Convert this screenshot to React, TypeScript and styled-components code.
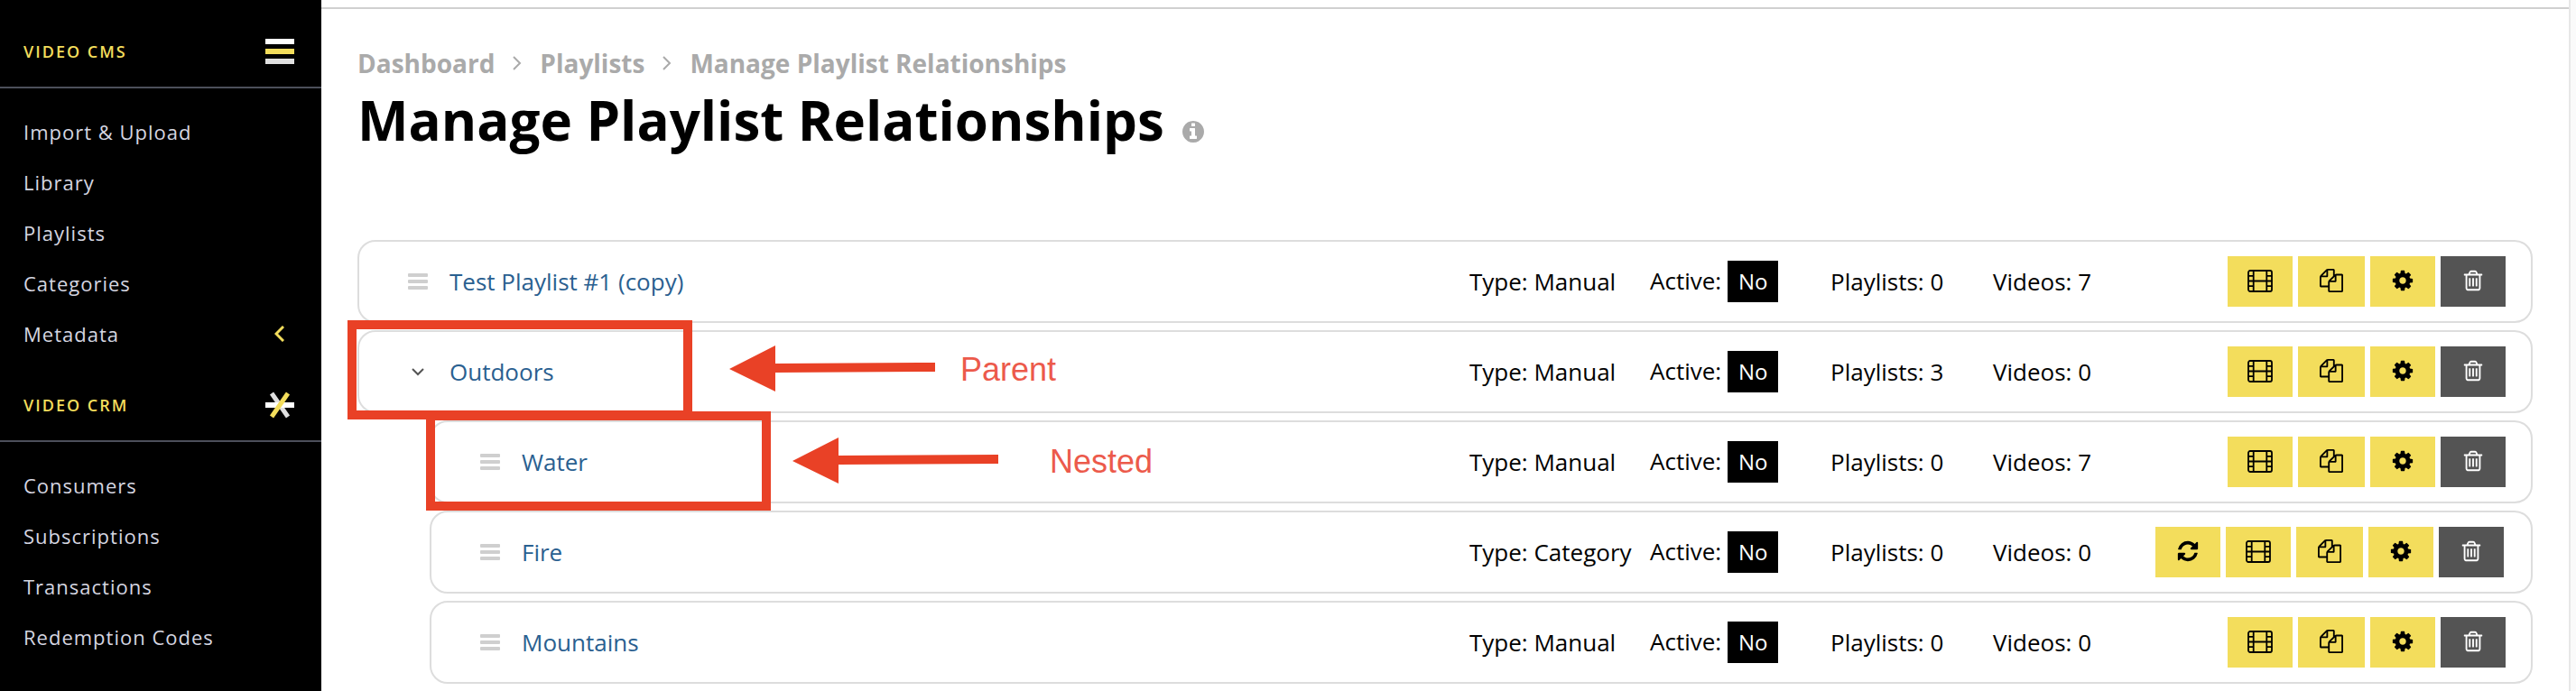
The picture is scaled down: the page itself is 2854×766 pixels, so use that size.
import React from "react";
import styled, { createGlobalStyle } from "styled-components";

const GlobalStyle = createGlobalStyle`
  *, *::before, *::after { box-sizing: border-box; }
  body {
    margin: 0;
    background: #fff;
    color: #000;
    font-family: "Open Sans", "Noto Sans", sans-serif;
    font-size: 26px;
    line-height: 36px;
  }
  a { text-decoration: none; color: inherit; }
`;

const YELLOW = "#f3dd5c";
const MARK = "#e94126";

const Shell = styled.div`
  display: flex;
  min-height: 100vh;
  overflow: hidden;
`;

const Sidebar = styled.aside`
  flex: 0 0 356px;
  padding-top: 18px;
  background: #000;
`;

const SectionHead = styled.div`
  display: flex;
  align-items: center;
  justify-content: space-between;
  height: 80px;
  padding: 0 30px 0 26px;
  border-bottom: 2px solid #4c4f5a;
`;

const SectionTitle = styled.h2`
  margin: 0;
  color: ${YELLOW};
  font-size: 18px;
  font-weight: 600;
  line-height: 24px;
  letter-spacing: 2px;
`;

const Menu = styled.ul`
  margin: 0;
  padding: 20px 0 12px;
  list-style: none;
`;

const MenuLink = styled.a`
  display: flex;
  align-items: center;
  justify-content: space-between;
  height: 56px;
  padding: 0 41px 0 26px;
  color: #d5d6e0;
  font-size: 22px;
  letter-spacing: 1px;
`;

const Main = styled.main`
  flex: 1;
  min-width: 0;
  margin-top: 8px;
  padding: 40px 40px 0;
  border-top: 2px solid #d0d0d0;
`;

const Gutter = styled.div`
  flex: 0 0 8px;
  border-left: 2px solid #e7e7e7;
  background: #fafafa;
`;

const Crumbs = styled.nav`
  display: flex;
  align-items: center;
  gap: 20px;
  color: #aaa;
  font-size: 28px;
  font-weight: 700;
  line-height: 40px;
`;

const TitleBar = styled.div`
  display: flex;
  align-items: center;
  gap: 18px;
`;

const Title = styled.h1`
  margin: 0;
  font-size: 60px;
  font-weight: 700;
  line-height: 86px;
`;

const InfoButton = styled.button`
  display: flex;
  margin-top: 26px;
  padding: 0;
  border: 0;
  background: none;
  color: #aaa;
`;

const List = styled.div`
  position: relative;
  display: flex;
  flex-direction: column;
  gap: 8px;
  margin-top: 90px;
`;

const Row = styled.article<{ $nested?: boolean }>`
  display: flex;
  align-items: center;
  height: 92px;
  margin-left: ${(p) => (p.$nested ? 80 : 0)}px;
  padding: 0 28px 0 52px;
  border: 2px solid #ddd;
  border-radius: 20px;
`;

const Handle = styled.button`
  display: flex;
  justify-content: center;
  width: 26px;
  margin-right: 22px;
  padding: 0;
  border: 0;
  background: none;
`;

const Name = styled.a`
  flex: 1;
  color: #2a6090;
`;

const Fact = styled.span<{ $width: number }>`
  flex: 0 0 ${(p) => p.$width}px;
  white-space: nowrap;
`;

const Badge = styled.span`
  display: inline-block;
  padding: 5px 12px;
  background: #000;
  color: #fff;
  font-size: 24px;
`;

const Actions = styled.div<{ $inset?: boolean }>`
  display: flex;
  flex: 0 0 408px;
  justify-content: flex-end;
  gap: 6px;
  padding-right: ${(p) => (p.$inset ? 2 : 0)}px;
`;

const ActionButton = styled.button<{ $tone?: "dark"; $wide?: boolean }>`
  display: flex;
  align-items: center;
  justify-content: center;
  width: ${(p) => (p.$wide ? 74 : 72)}px;
  height: 56px;
  padding: 0 0 2px;
  border: 0;
  background: ${(p) => (p.$tone === "dark" ? "#545454" : YELLOW)};
  color: ${(p) => (p.$tone === "dark" ? "#fff" : "#000")};
`;

const Callout = styled.div<{ $x: number; $y: number }>`
  position: absolute;
  left: ${(p) => p.$x}px;
  top: ${(p) => p.$y}px;
  width: 382px;
  height: 110px;
  border: 10px solid ${MARK};
  pointer-events: none;
`;

const Arrow = styled.svg<{ $x: number; $y: number }>`
  position: absolute;
  left: ${(p) => p.$x}px;
  top: ${(p) => p.$y}px;
`;

const CalloutText = styled.span<{ $x: number; $y: number }>`
  position: absolute;
  left: ${(p) => p.$x}px;
  top: ${(p) => p.$y}px;
  color: #ec5a4b;
  font-family: "Liberation Sans", Arial, sans-serif;
  font-size: 36px;
  line-height: 40px;
`;

const GLYPHS = {
  info: "M1152 1376v-160q0-14-9-23t-23-9h-96v-512q0-14-9-23t-23-9h-320q-14 0-23 9t-9 23v160q0 14 9 23t23 9h96v320h-96q-14 0-23 9t-9 23v160q0 14 9 23t23 9h448q14 0 23-9t9-23zm-128-896v-160q0-14-9-23t-23-9h-192q-14 0-23 9t-9 23v160q0 14 9 23t23 9h192q14 0 23-9t9-23zm640 416q0 209-103 385.5t-279.5 279.5-385.5 103-385.5-103-279.5-279.5-103-385.5 103-385.5 279.5-279.5 385.5-103 385.5 103 279.5 279.5 103 385.5z",
  cog: "M1152 896q0-106-75-181t-181-75-181 75-75 181 75 181 181 75 181-75 75-181zm512-109v222q0 12-8 23t-20 13l-185 28q-19 54-39 91 35 50 107 138 10 12 10 25t-9 23q-27 37-99 108t-94 71q-12 0-26-9l-138-108q-44 23-91 38-16 136-29 186-7 28-36 28h-222q-14 0-24.5-8.5t-11.5-21.5l-28-184q-49-16-90-37l-141 107q-10 9-25 9-14 0-25-11-126-114-165-168-7-10-7-23 0-12 8-23 15-21 51-66.5t54-70.5q-27-50-41-99l-183-27q-13-2-21-12.5t-8-23.5v-222q0-12 8-23t19-13l186-28q14-46 39-92-40-57-107-138-10-12-10-24 0-10 9-23 26-36 98.5-107.5t94.5-71.5q13 0 26 10l138 107q44-23 91-38 16-136 29-186 7-28 36-28h222q14 0 24.5 8.5t11.5 21.5l28 184q49 16 90 37l142-107q9-9 24-9 13 0 25 10 129 119 165 170 7 8 7 22 0 12-8 23-15 21-51 66.5t-54 70.5q26 50 41 98l183 28q13 2 21 12.5t8 23.5z",
  refresh: "M1639 1056q0 5-1 7-64 268-268 434.5t-478 166.5q-146 0-282.5-55t-243.5-157l-129 129q-19 19-45 19t-45-19-19-45v-448q0-26 19-45t45-19h448q26 0 45 19t19 45-19 45l-137 137q71 66 161 102t187 36q134 0 250-65t186-179q11-17 53-117 8-23 30-23h192q13 0 22.5 9.5t9.5 22.5zm25-800v448q0 26-19 45t-45 19h-448q-26 0-45-19t-19-45 19-45l138-138q-148-137-349-137-134 0-250 65t-186 179q-11 17-53 117-8 23-30 23h-199q-13 0-22.5-9.5t-9.5-22.5v-7q65-268 270-434.5t480-166.5q146 0 284 55.5t245 156.5l130-129q19-19 45-19t45 19 19 45z",
  copy: "M1696 384q40 0 68 28t28 68v1216q0 40-28 68t-68 28h-960q-40 0-68-28t-28-68v-288h-544q-40 0-68-28t-28-68v-672q0-40 20-88t48-76l408-408q28-28 76-48t88-20h416q40 0 68 28t28 68v328q68-40 128-40h416zm-544 213l-299 299h299v-299zm-640-384l-299 299h299v-299zm196 647l316-316v-416h-384v416q0 40-28 68t-68 28h-416v640h512v-256q0-40 20-88t48-76zm956 804v-1152h-384v416q0 40-28 68t-68 28h-416v640h896z",
  trash: "M704 736v576q0 14-9 23t-23 9h-64q-14 0-23-9t-9-23v-576q0-14 9-23t23-9h64q14 0 23 9t9 23zm256 0v576q0 14-9 23t-23 9h-64q-14 0-23-9t-9-23v-576q0-14 9-23t23-9h64q14 0 23 9t9 23zm256 0v576q0 14-9 23t-23 9h-64q-14 0-23-9t-9-23v-576q0-14 9-23t23-9h64q14 0 23 9t9 23zm128 724v-948h-896v948q0 22 7 40.5t14.5 27 10.5 8.5h832q3 0 10.5-8.5t14.5-27 7-40.5zm-672-1076h448l-48-117q-7-9-17-11h-317q-10 2-17 11zm928 32v64q0 14-9 23t-23 9h-96v948q0 83-47 143.5t-113 60.5h-832q-66 0-113-58.5t-47-141.5v-952h-96q-14 0-23-9t-9-23v-64q0-14 9-23t23-9h309l70-167q15-37 54-63t79-26h320q40 0 79 26t54 63l70 167h309q14 0 23 9t9 23z",
};

const Glyph = ({ name, size = 26 }: { name: keyof typeof GLYPHS; size?: number }) => (
  <svg width={size} height={size} viewBox="0 0 1792 1792" fill="currentColor" aria-hidden>
    <path d={GLYPHS[name]} />
  </svg>
);

const FilmIcon = () => (
  <svg width="28" height="25" viewBox="0 0 28 25" fill="none" stroke="currentColor" strokeWidth="1.8" aria-hidden>
    <rect x="1" y="1" width="26" height="23" rx="2" />
    <path d="M6.7 1v23M21.3 1v23M6.7 12.5h14.6M1 6.8h5.7M1 12.5h5.7M1 18.2h5.7M21.3 6.8H27M21.3 12.5H27M21.3 18.2H27" />
  </svg>
);

const GripIcon = () => (
  <svg width="22" height="18" viewBox="0 0 22 18" fill="#cfcfcf" aria-hidden>
    <rect width="22" height="4" rx="1" />
    <rect y="7" width="22" height="4" rx="1" />
    <rect y="14" width="22" height="4" rx="1" />
  </svg>
);

const ChevronDown = () => (
  <svg width="14" height="9" viewBox="0 0 14 9" fill="none" stroke="#555" strokeWidth="2" aria-hidden>
    <path d="M1 1l6 6 6-6" />
  </svg>
);

const ChevronLeft = () => (
  <svg width="11" height="18" viewBox="0 0 11 18" fill="none" stroke={YELLOW} strokeWidth="3" aria-hidden>
    <path d="M10 1L2 9l8 8" />
  </svg>
);

const CrumbArrow = () => (
  <svg width="10" height="16" viewBox="0 0 10 16" fill="none" stroke="#aaa" strokeWidth="2" aria-hidden>
    <path d="M1 1l7 7-7 7" />
  </svg>
);

const CmsLogo = () => (
  <svg width="32" height="28" viewBox="0 0 32 28" aria-hidden>
    <rect width="32" height="6" fill="#fff" />
    <rect y="11" width="32" height="6" fill={YELLOW} />
    <rect y="22" width="32" height="6" fill="#e0e0e0" />
  </svg>
);

const CrmLogo = () => (
  <svg width="32" height="30" viewBox="0 0 32 30" fill="none" strokeWidth="5" aria-hidden>
    <path d="M7 2l18 26" stroke="#e0e0e0" />
    <path d="M0 15h32" stroke="#fff" strokeWidth="6" />
    <path d="M25 2L7 28" stroke={YELLOW} />
  </svg>
);

const PointerArrow = ({ x, y }: { x: number; y: number }) => (
  <Arrow $x={x} $y={y} width="228" height="51" viewBox="0 0 228 51" fill={MARK} aria-hidden>
    <path d="M0 26L51 0v20l177-1v10l-177 1v21z" />
  </Arrow>
);

type Item = {
  name: string;
  type: string;
  playlists: number;
  videos: number;
  nested?: boolean;
  open?: boolean;
  sync?: boolean;
};

const ITEMS: Item[] = [
  { name: "Test Playlist #1 (copy)", type: "Manual", playlists: 0, videos: 7 },
  { name: "Outdoors", type: "Manual", playlists: 3, videos: 0, open: true },
  { name: "Water", type: "Manual", playlists: 0, videos: 7, nested: true },
  { name: "Fire", type: "Category", playlists: 0, videos: 0, nested: true, sync: true },
  { name: "Mountains", type: "Manual", playlists: 0, videos: 0, nested: true },
];

const SECTIONS = [
  {
    title: "VIDEO CMS",
    logo: <CmsLogo />,
    links: ["Import & Upload", "Library", "Playlists", "Categories", "Metadata"],
  },
  {
    title: "VIDEO CRM",
    logo: <CrmLogo />,
    links: ["Consumers", "Subscriptions", "Transactions", "Redemption Codes"],
  },
];

const PlaylistRow = ({ item }: { item: Item }) => (
  <Row $nested={item.nested}>
    <Handle aria-label={item.open ? "Collapse" : "Drag"}>
      {item.open ? <ChevronDown /> : <GripIcon />}
    </Handle>
    <Name href="#">{item.name}</Name>
    <Fact $width={200}>Type: {item.type}</Fact>
    <Fact $width={200}>
      Active: <Badge>No</Badge>
    </Fact>
    <Fact $width={180}>Playlists: {item.playlists}</Fact>
    <Fact $width={160}>Videos: {item.videos}</Fact>
    <Actions $inset={item.sync}>
      {item.sync && (
        <ActionButton aria-label="Sync">
          <Glyph name="refresh" />
        </ActionButton>
      )}
      <ActionButton aria-label="Videos">
        <FilmIcon />
      </ActionButton>
      <ActionButton aria-label="Duplicate" $wide>
        <Glyph name="copy" />
      </ActionButton>
      <ActionButton aria-label="Settings">
        <Glyph name="cog" />
      </ActionButton>
      <ActionButton aria-label="Delete" $tone="dark">
        <Glyph name="trash" />
      </ActionButton>
    </Actions>
  </Row>
);

export default function App() {
  return (
    <Shell>
      <GlobalStyle />
      <Sidebar>
        {SECTIONS.map((section) => (
          <section key={section.title}>
            <SectionHead>
              <SectionTitle>{section.title}</SectionTitle>
              {section.logo}
            </SectionHead>
            <Menu>
              {section.links.map((link) => (
                <li key={link}>
                  <MenuLink href="#">
                    {link}
                    {link === "Metadata" && <ChevronLeft />}
                  </MenuLink>
                </li>
              ))}
            </Menu>
          </section>
        ))}
      </Sidebar>
      <Main>
        <Crumbs aria-label="Breadcrumb">
          <a href="#">Dashboard</a>
          <CrumbArrow />
          <a href="#">Playlists</a>
          <CrumbArrow />
          <a href="#">Manage Playlist Relationships</a>
        </Crumbs>
        <TitleBar>
          <Title>Manage Playlist Relationships</Title>
          <InfoButton aria-label="About this page">
            <Glyph name="info" size={28} />
          </InfoButton>
        </TitleBar>
        <List>
          {ITEMS.map((item) => (
            <PlaylistRow key={item.name} item={item} />
          ))}
          <Callout $x={-11} $y={89} />
          <Callout $x={76} $y={190} />
          <PointerArrow x={412} y={117} />
          <PointerArrow x={482} y={219} />
          <CalloutText $x={668} $y={124}>Parent</CalloutText>
          <CalloutText $x={767} $y={226}>Nested</CalloutText>
        </List>
      </Main>
      <Gutter />
    </Shell>
  );
}
